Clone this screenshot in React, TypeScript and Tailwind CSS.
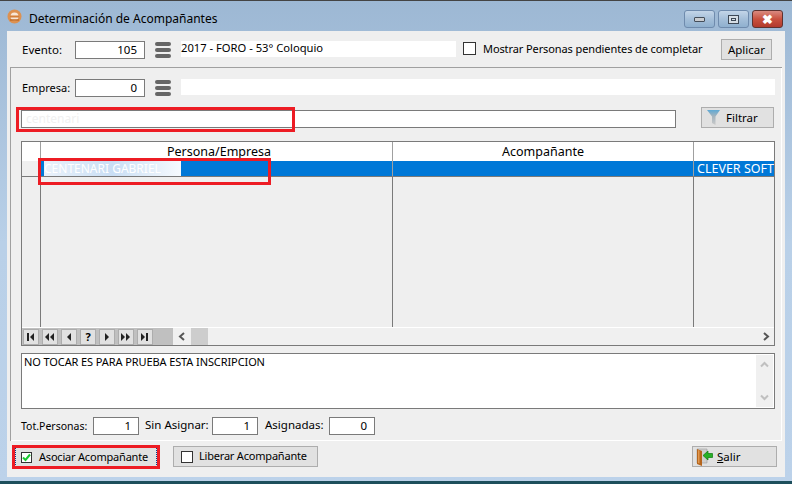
import React from 'react';

function ValueBox({ value, className }: { value: string; className: string }) {
  return (
    <div className={`h-[18px] shrink-0 bg-white border border-[#7a7a7a] text-right pr-[7px] text-[11.5px] leading-[16px] text-black ${className}`}>
      {value}
    </div>
  );
}

function MenuBars() {
  return (
    <div className="w-4 h-4 shrink-0 flex flex-col justify-between">
      <div className="h-1 rounded-sm bg-[#666666]" />
      <div className="h-1 rounded-sm bg-[#666666]" />
      <div className="h-1 rounded-sm bg-[#666666]" />
    </div>
  );
}

function CaptionButton({ children, red }: { children: React.ReactNode; red?: boolean }) {
  return (
    <div
      className={`h-[18px] w-[31px] flex items-center justify-center rounded-[3px] border ${
        red
          ? 'border-[#5e3230] bg-gradient-to-b from-[#d98a80] via-[#c9513f] to-[#b23a2c]'
          : 'border-[#6f8bad] bg-gradient-to-b from-[#c3d5e8] via-[#a5bfd9] to-[#8fb0cf]'
      }`}
    >
      {children}
    </div>
  );
}

function NavButton({ label }: { label: React.ReactNode }) {
  return (
    <div className="w-4 h-4 bg-[#e1e1e1] border border-[#adadad] flex items-center justify-center text-[11px] font-bold leading-none text-black">
      {label}
    </div>
  );
}

function Triangles({ pattern }: { pattern: string }) {
  // b = bar, l = left triangle, r = right triangle
  let x = 0;
  const parts = pattern.split('').map((p, i) => {
    const el =
      p === 'b' ? (
        <rect key={i} x={x} y={0} width={2} height={8} />
      ) : p === 'l' ? (
        <polygon key={i} points={`${x + 4},0 ${x + 4},8 ${x},4`} />
      ) : (
        <polygon key={i} points={`${x},0 ${x},8 ${x + 4},4`} />
      );
    x += p === 'b' ? 3 : 5;
    return el;
  });
  return (
    <svg width={x} height={8} viewBox={`0 0 ${x} 8`} fill="#222">
      {parts}
    </svg>
  );
}

function AppIcon() {
  return (
    <svg width="15" height="15" viewBox="0 0 15 15">
      <circle cx="7.5" cy="7.5" r="7" fill="#dd9150" />
      <circle cx="7.5" cy="7.5" r="4" fill="#f8e7d6" />
      <rect x="3" y="6.5" width="9" height="2" fill="#d47f38" />
      <path d="M3 11h9" stroke="#c06c28" strokeWidth="1.5" />
    </svg>
  );
}

function FunnelIcon() {
  return (
    <svg width="14" height="15" viewBox="0 0 14 15">
      <defs>
        <linearGradient id="fn" x1="0" y1="0" x2="0" y2="1">
          <stop offset="0" stopColor="#5fa9d4" />
          <stop offset="0.4" stopColor="#a3b4bf" />
          <stop offset="1" stopColor="#c9c9c9" />
        </linearGradient>
      </defs>
      <path d="M0 0h13L8.5 6.5V15L5 13V6.5z" fill="url(#fn)" />
    </svg>
  );
}

function DoorIcon() {
  return (
    <svg width="17" height="18" viewBox="0 0 17 18">
      <path d="M1 1h10v14H1z" fill="#cfcfcf" stroke="#9a9a9a" strokeWidth="0.6" />
      <path d="M1 1l5 2v15l-5-2z" fill="#b5651d" />
      <path d="M2 2l1.500 .6v13l-1.500-.6z" fill="#e2984f" />
      <path d="M16.500 5.500H12V3L7 7.500l5 4.500V9.500h4.500z" fill="#27b027" stroke="#0f7a0f" strokeWidth="0.7" />
    </svg>
  );
}

export default function App() {
  return (
    <div className="relative w-[792px] h-[484px] overflow-hidden flex flex-col bg-gradient-to-b from-[#9db8d4] via-[#b9d0e8] to-[#bcd2ea] font-['Noto_Sans','Liberation_Sans',sans-serif] text-[12px] text-[#111] border-t border-[#444] whitespace-nowrap">
      {/* title bar */}
      <div className="h-[30px] shrink-0 flex items-start pl-[7px] pr-[9px] pt-[9px]">
        <div className="-mt-[1px]"><AppIcon /></div>
        <span className="ml-[7px] text-[12px] leading-[18px] text-black">Determinación de Acompañantes</span>
        <div className="ml-auto flex gap-[3px]">
          <CaptionButton>
            <div className="w-[11px] h-[5px] bg-[#c9ccd0] border border-[#444e5a] rounded-[1px]" />
          </CaptionButton>
          <CaptionButton>
            <div className="w-[11px] h-[9px] bg-[#d5dde5] border border-[#3d4856] flex items-center justify-center">
              <div className="w-[5px] h-[3px] border border-[#3d4856]" />
            </div>
          </CaptionButton>
          <CaptionButton red>
            <span className="text-white font-bold text-[13px] leading-none">✖</span>
          </CaptionButton>
        </div>
      </div>

      {/* client area */}
      <div className="mx-[7px] h-[446px] shrink-0 bg-[#efefef] flex flex-col">
        {/* event row */}
        <div className="h-[36px] shrink-0 flex items-start pl-[15px] pt-[10px]">
          <span className="w-[53px] shrink-0 text-[11.5px] text-black leading-[18px]">Evento:</span>
          <ValueBox value="105" className="w-[70px]" />
          <div className="ml-[10px] mt-[1px]"><MenuBars /></div>
          <div className="ml-[10px] w-[275px] h-4 shrink-0 bg-white text-[11.200px] leading-[14px] text-black">2017 - FORO - 53° Coloquio</div>
          <div className="ml-[7px] mt-[1px] w-[13px] h-[13px] shrink-0 bg-white border border-[#333]" />
          <span className="ml-[7px] w-[220px] shrink-0 text-[11px] tracking-[-0.1px] text-black leading-[16px]">Mostrar Personas pendientes de completar</span>
          <div className="ml-[18px] -mt-[2px] w-[51px] h-[21px] shrink-0 bg-[#e1e1e1] border border-[#adadad] flex items-center justify-center text-[11.500px] text-black">Aplicar</div>
        </div>

        {/* group panel */}
        <div className="ml-[3px] mr-[3px] h-[374px] shrink-0 border-t border-l border-[#a0a0a0] flex flex-col">
          <div className="border-r border-b border-white h-full pl-[10px] pr-[6px] flex flex-col">
            <div className="mt-[11px] h-[18px] shrink-0 flex items-start">
              <span className="w-[54px] shrink-0 pl-[1px] text-[11px] leading-[17px] text-black">Empresa:</span>
              <ValueBox value="0" className="w-[70px]" />
              <div className="ml-[10px] mt-[1px]"><MenuBars /></div>
              <div className="ml-[10px] flex-1 h-4 bg-white" />
            </div>

            <div className="mt-[10px] h-[21px] shrink-0 flex items-start -mr-[1px]">
              <div className="mt-[3px] w-[655px] h-[18px] shrink-0 bg-white border border-[#7a7a7a] pl-[4px] leading-[16px] text-[#f0f0f0]">centenari</div>
              <div className="ml-[25px] w-[73px] h-[21px] shrink-0 bg-[#e1e1e1] border border-[#adadad] flex items-center pl-[5px] gap-[5px] text-[11.500px] text-black">
                <FunnelIcon />
                <span>Filtrar</span>
              </div>
            </div>

            {/* grid */}
            <div className="mt-[13px] h-[205px] shrink-0 border border-[#7a7a7a] flex flex-col">
              <div className="h-[19px] shrink-0 bg-white flex text-[12.500px] leading-[20px] text-black">
                <div className="w-[19px] shrink-0 border-r border-[#a0a0a0]" />
                <div className="w-[352px] shrink-0 border-r border-[#a0a0a0] text-center pl-[5px]">Persona/Empresa</div>
                <div className="w-[301px] shrink-0 border-r border-[#a0a0a0] text-center">Acompañante</div>
                <div className="flex-1" />
              </div>
              <div className="h-[16px] shrink-0 flex border-b border-[#7a7a7a]">
                <div className="w-[19px] shrink-0 border-r border-[#a0a0a0] bg-[#efefef]" />
                <div className="w-[352px] shrink-0 bg-[#0078d7] border-r border-[#a0a0a0]">
                  <div className="ml-[3px] w-[137px] h-full bg-gradient-to-r from-[#eaf2fb] via-[#c9def4] to-[#f6fafe] text-white leading-[15px] overflow-hidden">CENTENARI GABRIEL</div>
                </div>
                <div className="w-[301px] shrink-0 bg-[#0078d7] border-r border-[#a0a0a0]" />
                <div className="flex-1 bg-[#0078d7] text-white text-[12.500px] leading-[16px] pl-[3px]">CLEVER SOFT</div>
              </div>
              <div className="flex-1 flex bg-[#efefef]">
                <div className="w-[19px] shrink-0 border-r border-[#7a7a7a]" />
                <div className="w-[352px] shrink-0 border-r border-[#7a7a7a]" />
                <div className="w-[301px] shrink-0 border-r border-[#7a7a7a]" />
              </div>
              <div className="h-[18px] shrink-0 flex items-center bg-[#f0f0f0] border-t border-white">
                <div className="h-full w-[151px] shrink-0 bg-[#c0c0c0] pl-[1px] flex items-center gap-[3px]">
                  <NavButton label={<Triangles pattern="bl" />} />
                  <NavButton label={<Triangles pattern="ll" />} />
                  <NavButton label={<Triangles pattern="l" />} />
                  <NavButton label="?" />
                  <NavButton label={<Triangles pattern="r" />} />
                  <NavButton label={<Triangles pattern="rr" />} />
                  <NavButton label={<Triangles pattern="rb" />} />
                </div>
                <div className="w-[18px] shrink-0 flex justify-center">
                  <svg width="8" height="9" viewBox="0 0 8 9" fill="none" stroke="#555" strokeWidth="2"><path d="M6 1L2 4.500L6 8" /></svg>
                </div>
                <div className="w-[17px] h-full shrink-0 bg-[#cdcdcd]" />
                <div className="ml-auto w-[17px] flex justify-center">
                  <svg width="8" height="9" viewBox="0 0 8 9" fill="none" stroke="#555" strokeWidth="2"><path d="M2 1l4 3.500L2 8" /></svg>
                </div>
              </div>
            </div>

            {/* memo */}
            <div className="mt-[7px] h-[56px] shrink-0 border border-[#7a7a7a] bg-white flex">
              <div className="flex-1 pl-[2px] text-[11px] tracking-[-0.1px] leading-[16px] text-black">NO TOCAR ES PARA PRUEBA ESTA INSCRIPCION</div>
              <div className="w-[17px] my-[1px] mr-[1px] bg-[#f0f0f0] flex flex-col items-center justify-between py-[6px]">
                <svg width="9" height="7" viewBox="0 0 9 7" fill="none" stroke="#c0c0c0" strokeWidth="2"><path d="M1 5.500L4.500 2L8 5.500" /></svg>
                <svg width="9" height="7" viewBox="0 0 9 7" fill="none" stroke="#c0c0c0" strokeWidth="2"><path d="M1 1.500L4.500 5L8 1.500" /></svg>
              </div>
            </div>

            {/* totals */}
            <div className="mt-[8px] h-[18px] shrink-0 flex items-start text-black leading-[18px]">
              <span className="w-[72px] shrink-0 text-[10.500px]">Tot.Personas:</span>
              <ValueBox value="1" className="w-[46px]" />
              <span className="ml-[6px] w-[67px] shrink-0 text-[11.500px] leading-[16px]">Sin Asignar:</span>
              <ValueBox value="1" className="w-[46px]" />
              <span className="ml-[7px] w-[64px] shrink-0 text-[11.500px] leading-[16px]">Asignadas:</span>
              <ValueBox value="0" className="w-[46px]" />
            </div>
          </div>
        </div>

        {/* bottom row */}
        <div className="flex items-start pl-[8px] pt-[6px]">
          <div className="w-[142px] h-[20px] shrink-0 bg-[#e1e1e1] border border-dotted border-[#0a3a8a] flex items-center pl-[5px] text-black">
            <div className="w-[11px] h-[11px] shrink-0 bg-white border border-[#333] flex items-center justify-center">
              <svg width="9" height="9" viewBox="0 0 9 9" fill="none" stroke="#19c832" strokeWidth="2"><path d="M1 4.500l2.500 2.500L8 1.500" /></svg>
            </div>
            <span className="ml-[7px] text-[11px] tracking-[-0.2px]">Asociar Acompañante</span>
          </div>
          <div className="ml-[16px] -mt-[1px] w-[145px] h-[21px] shrink-0 bg-[#e1e1e1] border border-[#adadad] flex items-center pl-[7px] text-black">
            <div className="w-[12px] h-[12px] shrink-0 bg-white border border-[#333]" />
            <span className="ml-[6px] text-[11px] tracking-[-0.2px]">Liberar Acompañante</span>
          </div>
          <div className="ml-[374px] -mt-[1px] w-[85px] h-[21px] shrink-0 bg-[#e1e1e1] border border-[#adadad] flex items-center pl-[3px] text-black">
            <DoorIcon />
            <span className="ml-[4px] text-[11.500px]"><span className="underline">S</span>alir</span>
          </div>
        </div>
      </div>

      <div className="mt-auto h-[3px] shrink-0 bg-[#1d4f5c]" />

      {/* red annotation boxes */}
      <div className="absolute left-[16px] top-[106px] w-[279px] h-[25px] border-[3px] border-[#ed1c24]" />
      <div className="absolute left-[38px] top-[157px] w-[233px] h-[27px] border-[3px] border-[#ed1c24]" />
      <div className="absolute left-[12px] top-[444px] w-[148px] h-[24px] border-[3px] border-[#ed1c24]" />
    </div>
  );
}
